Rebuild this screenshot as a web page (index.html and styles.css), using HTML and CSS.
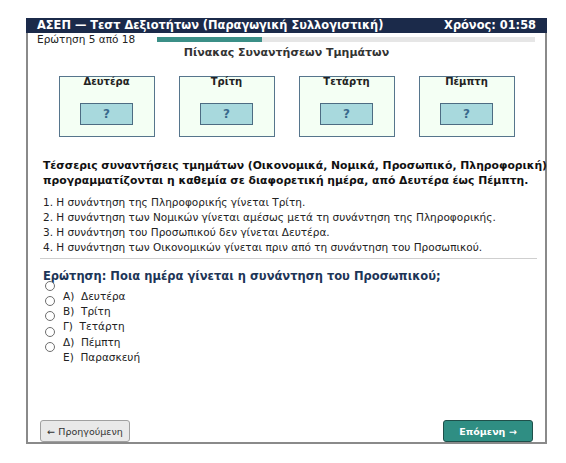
FILE: index.html
```html
<!DOCTYPE html>
<html lang="el">
<head>
    <meta charset="UTF-8">
    <meta name="viewport" content="width=device-width, initial-scale=1.0">
    <title>ΑΣΕΠ — Τεστ Δεξιοτήτων</title>
    <link rel="stylesheet" href="styles.css">
</head>
<body>

    <div class="quiz">
        <header class="topbar">
            <span>ΑΣΕΠ — Τεστ Δεξιοτήτων (Παραγωγική Συλλογιστική)</span>
            <span>Χρόνος: 01:58</span>
        </header>

        <div class="panel">
            <div class="meta">
                <span class="counter">Ερώτηση 5 από 18</span>
                <div class="progress"><div class="progress-fill" style="width: 27.8%"></div></div>
            </div>

            <h2 class="board-title">Πίνακας Συναντήσεων Τμημάτων</h2>

            <div class="days">
                <div class="day">
                    <div class="day-name">Δευτέρα</div>
                    <div class="slot">?</div>
                </div>
                <div class="day">
                    <div class="day-name">Τρίτη</div>
                    <div class="slot">?</div>
                </div>
                <div class="day">
                    <div class="day-name">Τετάρτη</div>
                    <div class="slot">?</div>
                </div>
                <div class="day">
                    <div class="day-name">Πέμπτη</div>
                    <div class="slot">?</div>
                </div>
            </div>

            <div class="content">
                <p class="intro">Τέσσερις συναντήσεις τμημάτων (Οικονομικά, Νομικά, Προσωπικό, Πληροφορική)<br>προγραμματίζονται η καθεμία σε διαφορετική ημέρα, από Δευτέρα έως Πέμπτη.</p>

                <ol class="rules">
                    <li>1. Η συνάντηση της Πληροφορικής γίνεται Τρίτη.</li>
                    <li>2. Η συνάντηση των Νομικών γίνεται αμέσως μετά τη συνάντηση της Πληροφορικής.</li>
                    <li>3. Η συνάντηση του Προσωπικού δεν γίνεται Δευτέρα.</li>
                    <li>4. Η συνάντηση των Οικονομικών γίνεται πριν από τη συνάντηση του Προσωπικού.</li>
                </ol>
            </div>

            <hr class="divider">

            <div class="content">
                <h3 class="question">Ερώτηση: Ποια ημέρα γίνεται η συνάντηση του Προσωπικού;</h3>

                <div class="options">
                    <label class="option"><input type="radio" name="answer" value="A"><span>Α)&nbsp; Δευτέρα</span></label>
                    <label class="option"><input type="radio" name="answer" value="B"><span>Β)&nbsp; Τρίτη</span></label>
                    <label class="option"><input type="radio" name="answer" value="C"><span>Γ)&nbsp; Τετάρτη</span></label>
                    <label class="option"><input type="radio" name="answer" value="D"><span>Δ)&nbsp; Πέμπτη</span></label>
                    <label class="option"><input type="radio" name="answer" value="E"><span>Ε)&nbsp; Παρασκευή</span></label>
                </div>
            </div>

            <div class="nav">
                <button class="btn btn-prev">← Προηγούμενη</button>
                <button class="btn btn-next">Επόμενη →</button>
            </div>
        </div>
    </div>

</body>
</html>
```

FILE: styles.css
```css
body {
    margin: 0;
    padding: 0;
    background-color: #ffffff;
    font-family: 'DejaVu Sans', 'Noto Sans', sans-serif;
    color: #222;
}

.quiz {
    width: 521px;
    margin: 18px 0 0 26px;
}

.topbar {
    display: flex;
    justify-content: space-between;
    height: 15px;
    padding: 0 11px;
    background-color: #1b2a4a;
    color: white;
    font-size: 11.4px;
    font-weight: bold;
    line-height: 15px;
}

.panel {
    display: flex;
    flex-direction: column;
    height: 409px;
    border: 2px solid #8a8a8a;
    border-top: none;
}

.meta {
    display: flex;
    align-items: center;
    height: 13px;
    padding: 0 10px 0 9px;
}

.counter {
    width: 120px;
    font-size: 10.5px;
    line-height: 13px;
    color: #222;
}

.progress {
    flex: 1;
    height: 5px;
    background-color: #e6e6e6;
}

.progress-fill {
    height: 100%;
    background-color: #3b8f87;
}

.board-title {
    margin: 0;
    height: 14px;
    font-size: 11px;
    line-height: 14px;
    text-align: center;
    color: #333;
}

.days {
    display: flex;
    justify-content: center;
    gap: 24px;
    margin-top: 16px;
}

.day {
    box-sizing: border-box;
    width: 96px;
    height: 61px;
    border: 1.5px solid #56758c;
    background-color: #f4fff4;
}

.day-name {
    font-size: 10px;
    font-weight: bold;
    line-height: 9px;
    text-align: center;
    color: #222;
}

.slot {
    box-sizing: border-box;
    width: 53px;
    height: 22px;
    margin: 17px auto 0;
    border: 1px solid #4d6c82;
    background-color: #a8d9dd;
    color: #3a6a8c;
    font-size: 12px;
    font-weight: bold;
    line-height: 20px;
    text-align: center;
}

.content {
    padding-left: 15px;
}

.intro {
    margin: 21px 0 0;
    font-size: 10.8px;
    font-weight: bold;
    line-height: 15px;
    white-space: nowrap;
    color: #111;
}

.rules {
    margin: 7px 0 0;
    padding: 0;
    list-style: none;
    font-size: 10.5px;
    line-height: 15px;
    color: #222;
}

.divider {
    margin: 3px 8px 0 12px;
    border: none;
    border-top: 1px solid #cfcfcf;
}

.question {
    margin: 10px 0 0;
    font-size: 11.5px;
    line-height: 15px;
    color: #1d3557;
}

.options {
    margin-top: 5px;
}

.option {
    display: flex;
    align-items: flex-start;
    height: 15.2px;
    font-size: 10.5px;
    line-height: 15px;
    color: #222;
}

.option input {
    appearance: none;
    box-sizing: border-box;
    width: 10px;
    height: 10px;
    margin: -8px 8px 0 2px;
    border: 1px solid #6e6e6e;
    border-radius: 50%;
    background-color: white;
}

.nav {
    display: flex;
    justify-content: space-between;
    margin-top: auto;
    padding: 0 12px;
}

.btn {
    width: 90px;
    height: 22px;
    border-radius: 3px;
    font-family: 'DejaVu Sans', sans-serif;
    font-size: 9.5px;
    cursor: pointer;
}

.btn-prev {
    background-color: #e9e9e9;
    border: 1px solid #a0a0a0;
    color: #333;
}

.btn-next {
    background-color: #2f8e83;
    border: 1px solid #1f4f4a;
    color: white;
    font-weight: bold;
}
```
